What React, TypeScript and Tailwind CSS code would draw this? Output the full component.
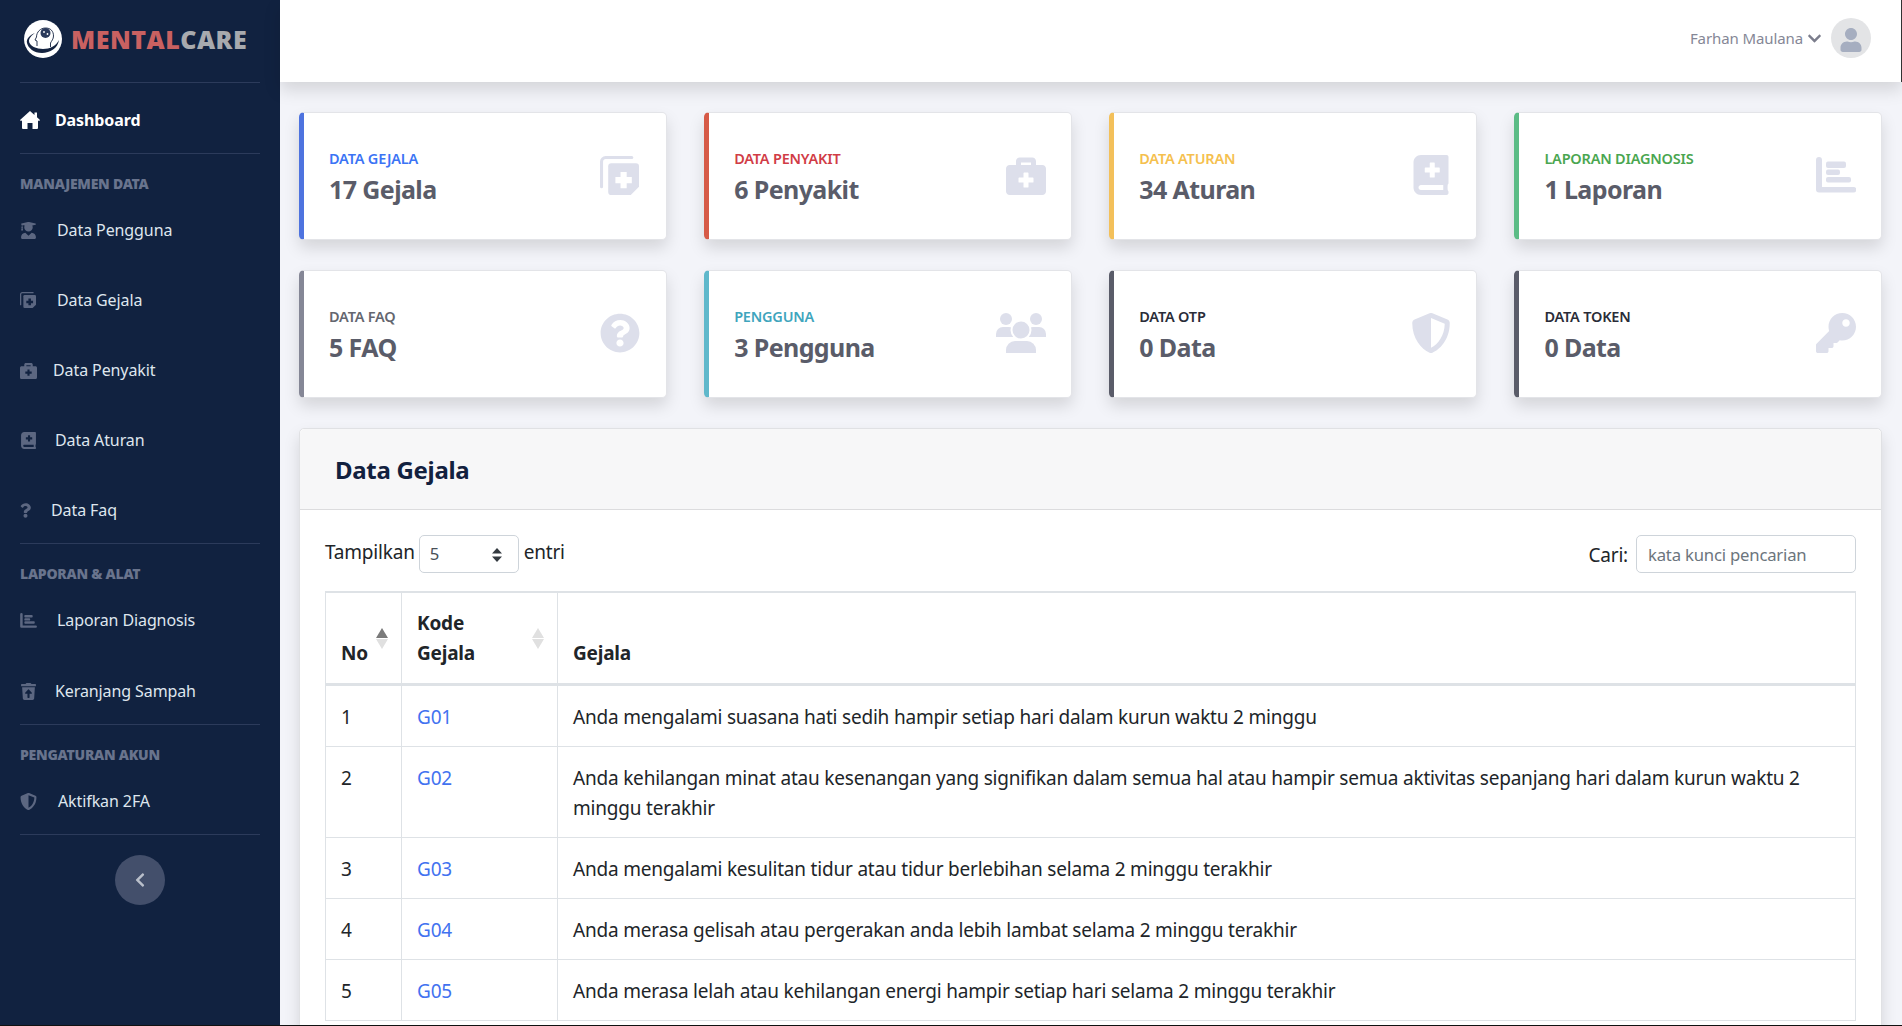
import React from "react";
import {
  FaUserGraduate, FaBriefcaseMedical, FaBookMedical, FaQuestion, FaTrashRestore,
  FaShieldAlt, FaChevronLeft, FaChevronDown, FaUser, FaQuestionCircle, FaKey,
} from "react-icons/fa";

const FileIcon = ({ className, cut = "#fff" }: { className?: string; cut?: string }) => (
  <svg viewBox="0 0 38 38" className={className} fill="currentColor">
    <path d="M11 7H35a3 3 0 0 1 3 3V30L30 38H11a3 3 0 0 1-3-3V10a3 3 0 0 1 3-3Z" />
    <path d="M31 1.5H5.5a4 4 0 0 0-4 4V30" fill="none" stroke="currentColor" strokeWidth="3" strokeLinecap="round" />
    <path d="M20 15.5h6v5h5v6h-5v5h-6v-5h-5v-6h5Z" fill={cut} />
  </svg>
);

const BarsIcon = ({ className }: { className?: string }) => (
  <svg viewBox="0 0 40 36" className={className} fill="currentColor">
    <path d="M3 0a3 3 0 0 1 3 3V30H37.500a2.500 2.500 0 0 1 0 5.500H3a3 3 0 0 1-3-3V3a3 3 0 0 1 3-3Z" />
    <rect x="10" y="4.500" width="20" height="6.500" rx="2" />
    <rect x="10" y="12.500" width="14" height="5.500" rx="2" />
    <rect x="10" y="20" width="25" height="5.500" rx="2" />
  </svg>
);

const PeopleIcon = ({ className }: { className?: string }) => (
  <svg viewBox="0 0 50 40" className={className} fill="currentColor">
    <circle cx="10" cy="6" r="6" />
    <circle cx="40" cy="6" r="6" />
    <path d="M0 24v-3a7 7 0 0 1 7-7h6a7 7 0 0 1 7 7v3Z" />
    <path d="M30 24v-3a7 7 0 0 1 7-7h6a7 7 0 0 1 7 7v3Z" />
    <circle cx="25" cy="17" r="9.500" stroke="#fff" strokeWidth="2" />
    <path d="M10 40v-3a9 9 0 0 1 9-9h12a9 9 0 0 1 9 9v3Z" />
  </svg>
);

const HouseIcon = ({ className }: { className?: string }) => (
  <svg viewBox="0 0 20 18" className={className} fill="currentColor">
    <path d="M10 0l4.500 4V1.500h2.500v4.800L20 9l-1 1.200-1-.9V17a1 1 0 0 1-1 1h-4.500v-6h-5v6H3a1 1 0 0 1-1-1V9.300l-1 .9L0 9Z" />
  </svg>
);

const Logo = () => (
  <svg viewBox="0 0 38 38" className="w-[38px] h-[38px] shrink-0">
    <circle cx="19" cy="19" r="19" fill="#fff" />
    <path d="M3 23c-1-4 3-8 8-10-3 2-6 5-6 8 0 5 8 8 14 8 7 0 13-3 16-9-1 8-9 13-17 13C10 33 4 28 3 23Z" fill="#152441" />
    <path d="M13 26v-5l-2-1 1.500-3c0-5 4-9 9-9s8 3 8 8c0 3-2 5-3 7v4" fill="none" stroke="#152441" strokeWidth="0.9" />
    <circle cx="21.500" cy="13" r="5" fill="#2b3a5c" />
    <circle cx="20" cy="12" r="0.9" fill="#fff" />
    <circle cx="23.500" cy="14" r="0.9" fill="#fff" />
  </svg>
);

const Hr = () => <div className="h-px bg-[#2c3b5b] mx-5 shrink-0" />;

const Heading = ({ children }: { children: React.ReactNode }) => (
  <div className="pt-5 mb-3 h-[41px] ml-5 text-[14px] leading-[20px] font-black tracking-[-0.25px] uppercase text-[#69748d]">
    {children}
  </div>
);

const Item = ({ icon, label, gap }: { icon: React.ReactNode; label: string; gap: string }) => (
  <div className="h-[46px] flex items-center pl-5 text-[16px] tracking-[-0.1px] text-[#dfe6ee]">
    <span className={`text-[#5c6781] ${gap}`}>{icon}</span>
    <span>{label}</span>
  </div>
);

const Sidebar = () => (
  <aside className="w-[280px] shrink-0 bg-[#112240] flex flex-col">
    <div className="h-[82px] flex items-center pl-6 pb-1 gap-[9px] shrink-0">
      <Logo />
      <div className="text-[25px] leading-none font-extrabold tracking-[0.5px]" style={{ fontFamily: '"Open Sans", sans-serif' }}>
        <span className="text-[#c96161]">MENTAL</span>
        <span className="text-[#a8aaae]">CARE</span>
      </div>
    </div>
    <Hr />
    <div className="h-[70px] pt-1 flex items-center pl-5 text-[16px] tracking-[-0.1px] font-bold text-white shrink-0">
      <HouseIcon className="w-5 h-[18px] mr-[15px]" />
      Dashboard
    </div>
    <Hr />
    <Heading>Manajemen Data</Heading>
    <div className="flex flex-col gap-6 mb-[10px]">
      <Item gap="mr-5" icon={<FaUserGraduate className="text-[17px]" />} label="Data Pengguna" />
      <Item gap="mr-[21px]" icon={<FileIcon className="w-4 h-4" cut="#112240" />} label="Data Gejala" />
      <Item gap="mr-4" icon={<FaBriefcaseMedical className="text-[17px]" />} label="Data Penyakit" />
      <Item gap="mr-[18px]" icon={<FaBookMedical className="text-[17px]" />} label="Data Aturan" />
      <Item gap="mr-[20px]" icon={<FaQuestion className="text-[15px] w-[11px]" />} label="Data Faq" />
    </div>
    <Hr />
    <Heading>Laporan &amp; Alat</Heading>
    <div className="flex flex-col gap-[25px] mb-[10px]">
      <Item gap="mr-5" icon={<BarsIcon className="w-[17px] h-[15px]" />} label="Laporan Diagnosis" />
      <Item gap="mr-[18px]" icon={<FaTrashRestore className="text-[17px]" />} label="Keranjang Sampah" />
    </div>
    <Hr />
    <Heading>Pengaturan Akun</Heading>
    <div className="flex flex-col gap-6 mb-[10px]">
      <Item gap="mr-[21px]" icon={<FaShieldAlt className="text-[17px]" />} label="Aktifkan 2FA" />
    </div>
    <Hr />
    <button className="mt-5 self-center w-[50px] h-[50px] rounded-full bg-[#434f6b] flex items-center justify-center text-[#b9bfca]">
      <FaChevronLeft className="text-[16px]" />
    </button>
  </aside>
);

const cards = [
  { t: "Data Gejala", v: "17 Gejala", b: "border-l-[#4e73df]", c: "text-[#3b74f5]", i: <FileIcon className="w-[39px] h-[39px] mr-[2px]" /> },
  { t: "Data Penyakit", v: "6 Penyakit", b: "border-l-[#d65a47]", c: "text-[#d13c46]", i: <FaBriefcaseMedical className="text-[40px]" /> },
  { t: "Data Aturan", v: "34 Aturan", b: "border-l-[#f3c05a]", c: "text-[#f5c04e]", i: <FaBookMedical className="text-[40px]" /> },
  { t: "Laporan Diagnosis", v: "1 Laporan", b: "border-l-[#5cbc86]", c: "text-[#4aa650]", i: <BarsIcon className="w-10 h-9" /> },
  { t: "Data FAQ", v: "5 FAQ", b: "border-l-[#858796]", c: "text-[#64666f]", i: <FaQuestionCircle className="text-[40px] mr-px" /> },
  { t: "Pengguna", v: "3 Pengguna", b: "border-l-[#5fb8cb]", c: "text-[#3fa5bd]", i: <PeopleIcon className="w-[50px] h-10" /> },
  { t: "Data OTP", v: "0 Data", b: "border-l-[#5a5c69]", c: "text-[#2a2c38]", i: <FaShieldAlt className="text-[40px]" /> },
  { t: "Data Token", v: "0 Data", b: "border-l-[#5a5c69]", c: "text-[#2a2c38]", i: <FaKey className="text-[40px]" /> },
];

const Card = ({ t, v, b, c, i }: (typeof cards)[number]) => (
  <div className={`h-[128px] bg-white rounded-[5px] border border-[#e3e4e8] border-l-[5px] ${b} shadow-[0_8px_16px_rgba(0,0,0,0.13)] flex items-center justify-between pl-[25px] pr-[25px]`}>
    <div className="pt-[4px]">
      <div className={`text-[14.5px] tracking-[-0.2px] leading-[18px] font-semibold uppercase ${c}`}>{t}</div>
      <div className="mt-[4px] text-[25px] tracking-[-0.6px] leading-[36px] font-bold text-[#5a5c69]">{v}</div>
    </div>
    <div className="text-[#dddfeb] mb-[2px]">{i}</div>
  </div>
);

const rows = [
  ["1", "G01", "Anda mengalami suasana hati sedih hampir setiap hari dalam kurun waktu 2 minggu"],
  ["2", "G02", "Anda kehilangan minat atau kesenangan yang signifikan dalam semua hal atau hampir semua aktivitas sepanjang hari dalam kurun waktu 2 minggu terakhir"],
  ["3", "G03", "Anda mengalami kesulitan tidur atau tidur berlebihan selama 2 minggu terakhir"],
  ["4", "G04", "Anda merasa gelisah atau pergerakan anda lebih lambat selama 2 minggu terakhir"],
  ["5", "G05", "Anda merasa lelah atau kehilangan energi hampir setiap hari selama 2 minggu terakhir"],
];

const Sort = ({ up }: { up: string }) => (
  <svg viewBox="0 0 12 21" className="absolute right-[13px] top-[35px] w-3 h-[21px]">
    <path d="M6 0l6 10H0Z" fill={up} />
    <path d="M6 21l6-10H0Z" fill="#e0e0e0" />
  </svg>
);

const Panel = () => (
  <div className="bg-white rounded-[5px] border border-[#e0e1e4] shadow-[0_8px_16px_rgba(0,0,0,0.13)]">
    <div className="h-[81px] pt-[2px] bg-[#f7f7f8] border-b border-[#dcdcde] flex items-center pl-[35px] rounded-t-[5px]">
      <h2 className="text-[24px] tracking-[-0.3px] font-bold text-[#12213f]">Data Gejala</h2>
    </div>
    <div className="px-[25px] pt-[25px]">
      <div className="flex items-center justify-between h-[38px] text-[19px] tracking-[-0.2px] text-[#212529]">
        <div className="flex items-center">
          <span className="-mt-1 mr-1">Tampilkan</span>
          <div className="relative">
            <select className="appearance-none w-[100px] h-[38px] border border-[#ced4da] rounded-[5px] pl-[10px] text-[16.7px] text-[#495057] bg-white">
              <option>5</option>
            </select>
            <svg viewBox="0 0 10 14" className="absolute right-[17px] top-[13px] w-[10px] h-[14px]">
              <path d="M5 0l5 5.500H0Z M5 14l5-5.500H0Z" fill="#343a40" />
            </svg>
          </div>
          <span className="-mt-1 ml-[5px]">entri</span>
        </div>
        <div className="flex items-center gap-2">
          <span className="mt-[2px]">Cari:</span>
          <input
            placeholder="kata kunci pencarian"
            className="w-[220px] h-[38px] border border-[#ced4da] rounded-[5px] px-[11px] text-[16.7px] placeholder:text-[#6c757d] outline-none"
          />
        </div>
      </div>
      <table className="mt-[18px] w-[1531px] table-fixed border-collapse text-[19px] tracking-[-0.2px] leading-[30px] text-[#212529]">
        <thead>
          <tr>
            <th className="relative w-[76px] border border-b-[3px] border-t-2 border-[#dee2e6] p-[15px] text-left align-bottom font-bold">
              No
              <Sort up="#7a7a7a" />
            </th>
            <th className="relative w-[156px] border border-b-[3px] border-t-2 border-[#dee2e6] p-[15px] text-left align-bottom font-bold">
              Kode
              <br />
              Gejala
              <Sort up="#e0e0e0" />
            </th>
            <th className="border border-b-[3px] border-t-2 border-[#dee2e6] p-[15px] text-left align-bottom font-bold">Gejala</th>
          </tr>
        </thead>
        <tbody>
          {rows.map((r) => (
            <tr key={r[0]}>
              <td className="border border-[#dee2e6] px-[15px] pt-4 pb-[14px] align-top">{r[0]}</td>
              <td className="border border-[#dee2e6] px-[15px] pt-4 pb-[14px] align-top text-[#4272f0]">{r[1]}</td>
              <td className="border border-[#dee2e6] px-[15px] pt-4 pb-[14px] align-top">{r[2]}</td>
            </tr>
          ))}
        </tbody>
      </table>
      <div className="h-10" />
    </div>
  </div>
);

export default function App() {
  return (
    <div className="h-[1026px] w-[1902px] overflow-hidden flex border-b border-[#111]" style={{ fontFamily: '"Noto Sans", sans-serif' }}>
      <Sidebar />
      <div className="flex-1 min-w-0 flex flex-col bg-[#f3f4f9]">
        <header className="relative z-10 h-[82px] shrink-0 bg-white shadow-[0_8px_16px_rgba(0,0,0,0.13)] border-r border-[#333] flex items-center justify-end pr-[30px] pb-[6px]">
          <span className="text-[15px] tracking-[-0.1px] text-[#858796]">Farhan Maulana</span>
          <FaChevronDown className="text-[15px] text-[#7b7d8c] ml-[4px]" />
          <div className="ml-[9px] w-10 h-10 rounded-full bg-[#e3e4e6] flex items-end justify-center overflow-hidden">
            <FaUser className="text-[24px] text-[#a6aec0] mb-[6px]" />
          </div>
        </header>
        <main className="flex-1 min-h-0 pl-[19px] pr-5 pt-[30px]">
          <div className="grid grid-cols-4 gap-x-[37.5px] gap-y-[30px] mb-[30px]">
            {cards.map((c) => (
              <Card key={c.t} {...c} />
            ))}
          </div>
          <Panel />
        </main>
      </div>
    </div>
  );
}
